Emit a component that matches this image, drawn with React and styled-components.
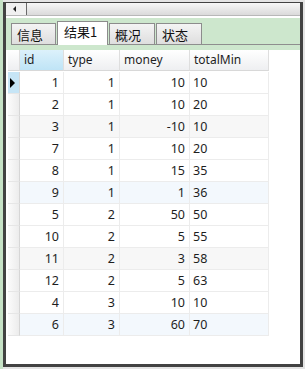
import React from 'react';
import styled, { createGlobalStyle } from 'styled-components';

const GlobalStyle = createGlobalStyle`
  html, body {
    margin: 0;
    padding: 0;
    background: #dfe9df;
  }
  body {
    font-family: "Noto Sans", "Noto Sans CJK SC", sans-serif;
    font-size: 12px;
    color: #1e1e1e;
  }
`;

const Page = styled.div`
  width: 305px;
  height: 369px;
  overflow: hidden;
  background: linear-gradient(to right, #c6e2c6 0, #c6e2c6 3px, #e4e4e4 3px);
`;

const Frame = styled.div`
  margin: 2px 0 0 3px;
  width: 294px;
  height: 361px;
  border: 3px solid #424242;
  border-top-width: 1px;
  background: #fff;
  display: flex;
  flex-direction: column;
`;

const ScrollBar = styled.div`
  height: 12px;
  display: flex;
  background: #f0f0f0;
  border-bottom: 1px solid #b8b8b8;
`;

const ArrowButton = styled.div`
  width: 20px;
  display: flex;
  align-items: center;
  justify-content: center;
  padding-right: 4px;
  box-sizing: border-box;
`;

const Arrow = styled.div`
  width: 0;
  height: 0;
  border-top: 3px solid transparent;
  border-bottom: 3px solid transparent;
  border-right: 3px solid #222;
`;

const Thumb = styled.div`
  flex: 1;
  border-left: 1px solid #6a6a6a;
  background: linear-gradient(#f7f7f7, #dadada);
`;

const TabStrip = styled.div`
  margin-top: 2px;
  background: #cde7cd;
  padding: 0 0 5px 5px;
`;

const TabRow = styled.div`
  height: 26px;
  display: flex;
  align-items: flex-end;
  border-bottom: 1px solid #8e8e8e;
`;

const Tab = styled.div`
  height: ${p => (p.$active ? '24px' : '21px')};
  width: ${p => p.$w}px;
  box-sizing: border-box;
  border: 1px solid #8c8c8c;
  border-bottom: none;
  margin-right: 1px;
  margin-bottom: ${p => (p.$active ? '-1px' : '0')};
  padding: ${p => (p.$active ? '2px 0 0 6px' : '3px 0 0 5px')};
  background: ${p => (p.$active ? '#fff' : 'linear-gradient(#f4f4f4, #dedede)')};
  font-family: "Noto Sans CJK SC", sans-serif;
  font-size: 13px;
  line-height: 16px;
  color: #111;
`;

const Grid = styled.div`
  display: grid;
  grid-template-columns: 12px 44px 56px 70px 79px;
  grid-auto-rows: 22px;
  margin-left: 2px;
  width: 261px;
`;

const HeadCell = styled.div`
  height: 21px;
  box-sizing: border-box;
  padding: 1px 0 0 4px;
  line-height: 17px;
  border-right: 1px solid #dedede;
  border-bottom: 1px solid #d8d8d8;
  background: ${p => (p.$sel ? 'linear-gradient(#dcf1fb, #bfe4f6)' : 'linear-gradient(#ffffff, #eeeff1)')};
`;

const RowHead = styled.div`
  box-sizing: border-box;
  border-right: 1px solid #d6d6d6;
  border-bottom: 1px solid #e6e6e6;
  background: ${p => (p.$cur ? '#c6e5f6' : 'linear-gradient(to right, #fbfbfb, #ececec)')};
  display: flex;
  align-items: center;
  padding-left: 2px;
`;

const Pointer = styled.div`
  width: 0;
  height: 0;
  border-top: 5px solid transparent;
  border-bottom: 5px solid transparent;
  border-left: 5px solid #000;
`;

const Cell = styled.div`
  box-sizing: border-box;
  border-right: 1px solid #ececec;
  border-bottom: 1px solid #ececec;
  padding: 0 ${p => (p.$left ? '0 0 3px' : '4px 0 0')};
  text-align: ${p => (p.$left ? 'left' : 'right')};
  line-height: 21px;
  font-size: 12.5px;
  background: ${p => p.$bg};
`;

const rows = [
  [1, 1, 10, 10],
  [2, 1, 10, 20],
  [3, 1, -10, 10],
  [7, 1, 10, 20],
  [8, 1, 15, 35],
  [9, 1, 1, 36],
  [5, 2, 50, 50],
  [10, 2, 5, 55],
  [11, 2, 3, 58],
  [12, 2, 5, 63],
  [4, 3, 10, 10],
  [6, 3, 60, 70],
];

const shade = i => {
  if (i % 3 !== 2) return '#fff';
  return (i + 1) % 6 === 0 ? '#f3f8fd' : '#f7f7f7';
};

const tabs = [
  { label: '信息', w: 45 },
  { label: '结果1', w: 51, active: true },
  { label: '概况', w: 46 },
  { label: '状态', w: 46 },
];

const App = () => (
  <Page>
    <GlobalStyle />
    <Frame>
      <ScrollBar>
        <ArrowButton><Arrow /></ArrowButton>
        <Thumb />
      </ScrollBar>
      <TabStrip>
        <TabRow>
          {tabs.map(t => (
            <Tab key={t.label} $w={t.w} $active={t.active}>{t.label}</Tab>
          ))}
        </TabRow>
      </TabStrip>
      <Grid>
        <HeadCell />
        <HeadCell $sel>id</HeadCell>
        <HeadCell>type</HeadCell>
        <HeadCell>money</HeadCell>
        <HeadCell>totalMin</HeadCell>
        {rows.map((r, i) => (
          <React.Fragment key={i}>
            <RowHead $cur={i === 0}>{i === 0 && <Pointer />}</RowHead>
            <Cell $bg={shade(i)}>{r[0]}</Cell>
            <Cell $bg={shade(i)}>{r[1]}</Cell>
            <Cell $bg={shade(i)}>{r[2]}</Cell>
            <Cell $bg={shade(i)} $left>{r[3]}</Cell>
          </React.Fragment>
        ))}
      </Grid>
    </Frame>
  </Page>
);

export default App;
